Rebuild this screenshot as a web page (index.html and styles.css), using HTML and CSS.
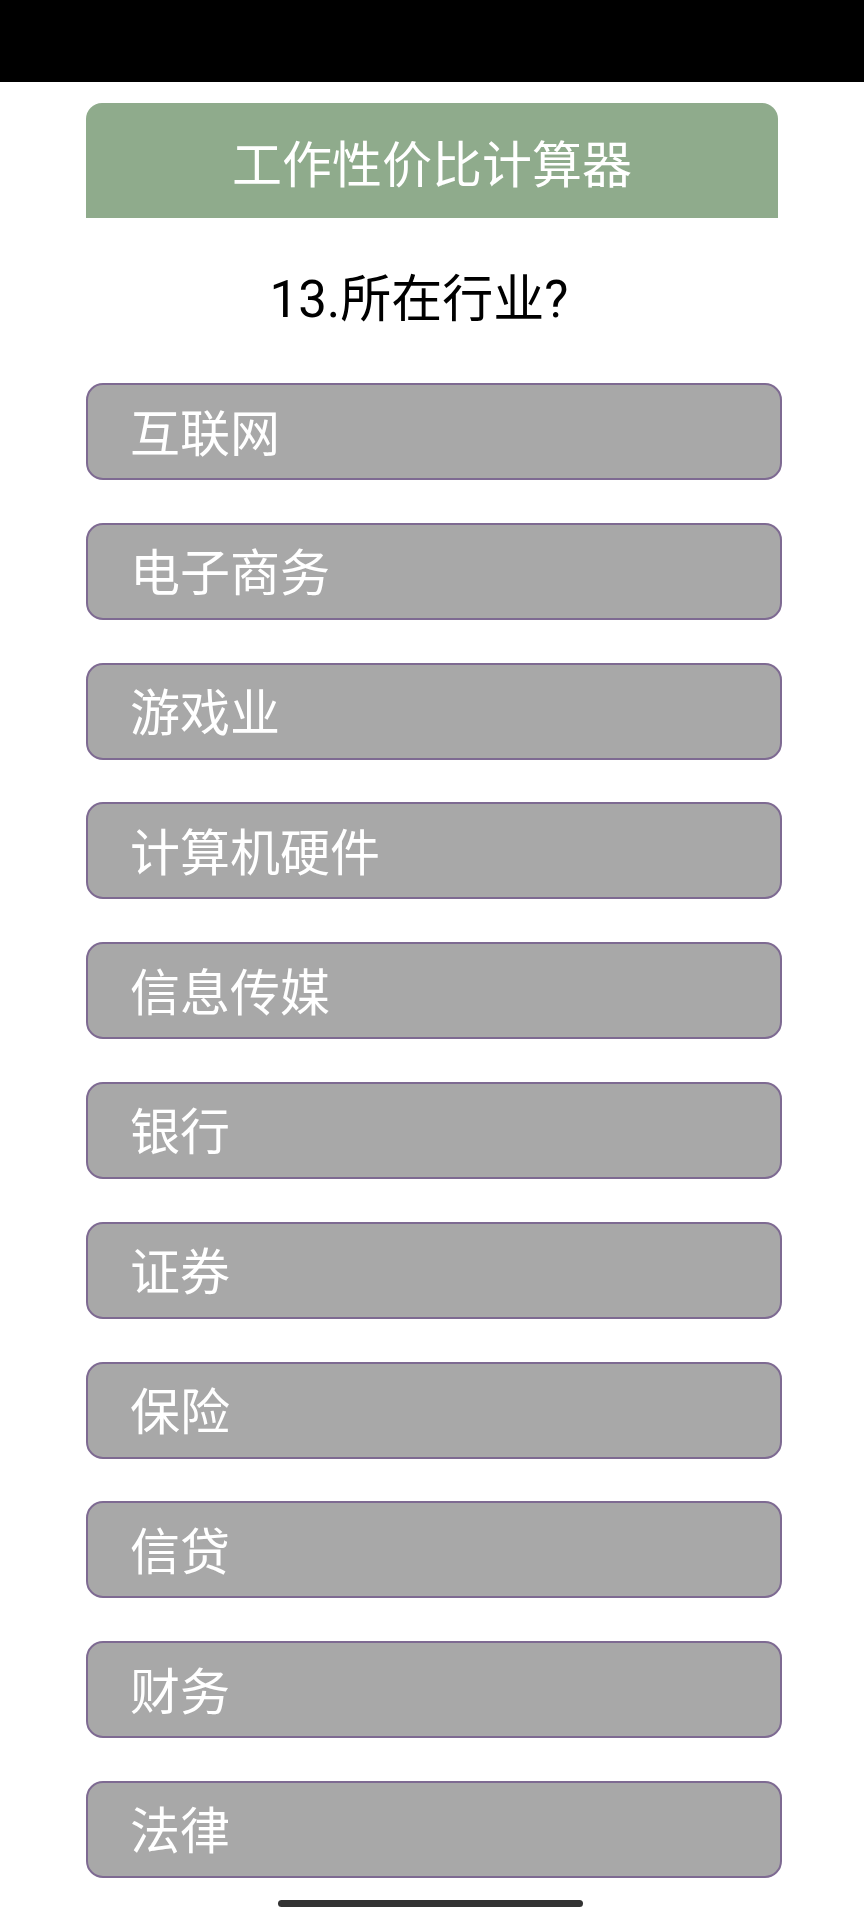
FILE: index.html
```html
<!DOCTYPE html>
<html lang="zh-CN">
<head>
<meta charset="utf-8">
<title>工作性价比计算器</title>
<link rel="stylesheet" href="styles.css">
</head>
<body>
<div class="status-bar"></div>
<main class="page">
  <header class="app-header">工作性价比计算器</header>
  <div class="question">13.所在行业?</div>
  <div class="options">
    <button class="option">互联网</button>
    <button class="option">电子商务</button>
    <button class="option">游戏业</button>
    <button class="option">计算机硬件</button>
    <button class="option">信息传媒</button>
    <button class="option">银行</button>
    <button class="option">证券</button>
    <button class="option">保险</button>
    <button class="option">信贷</button>
    <button class="option">财务</button>
    <button class="option">法律</button>
  </div>
</main>
<div class="home-indicator"></div>
</body>
</html>
```
FILE: styles.css
```css
html, body {
  margin: 0;
  padding: 0;
  background: #ffffff;
  font-family: "Roboto", "Noto Sans CJK SC", sans-serif;
}
body {
  width: 864px;
  height: 1920px;
  overflow: hidden;
  position: relative;
}
.status-bar {
  height: 82px;
  background: #000000;
}
.page {
  padding: 21px 82px 0 86px;
  display: flex;
  flex-direction: column;
}
.app-header {
  width: 692px;
  height: 115px;
  background: #8fab8c;
  border-radius: 16px 16px 0 0;
  color: #ffffff;
  font-size: 50px;
  display: flex;
  align-items: center;
  justify-content: center;
  padding-top: 1px;
  box-sizing: border-box;
  font-family: "Noto Sans CJK SC", sans-serif;
}
.question {
  height: 165px;
  display: flex;
  align-items: center;
  justify-content: center;
  font-size: 51px;
  color: #000000;
  width: 692px;
  padding: 0 26px 12px 0;
  box-sizing: border-box;
}
.options {
  display: flex;
  flex-direction: column;
  gap: 42.8px;
}
.option {
  width: 696px;
  height: 97px;
  box-sizing: border-box;
  background: #a8a8a8;
  border: 2px solid #7e6a92;
  border-radius: 17px;
  color: #ffffff;
  font-family: "Noto Sans CJK SC", sans-serif;
  font-size: 50px;
  text-align: left;
  padding: 0 0 4px 42px;
  margin: 0;
  display: flex;
  align-items: center;
}
.home-indicator {
  position: absolute;
  left: 278px;
  top: 1900px;
  width: 305px;
  height: 7px;
  border-radius: 4px;
  background: #333333;
}
```
